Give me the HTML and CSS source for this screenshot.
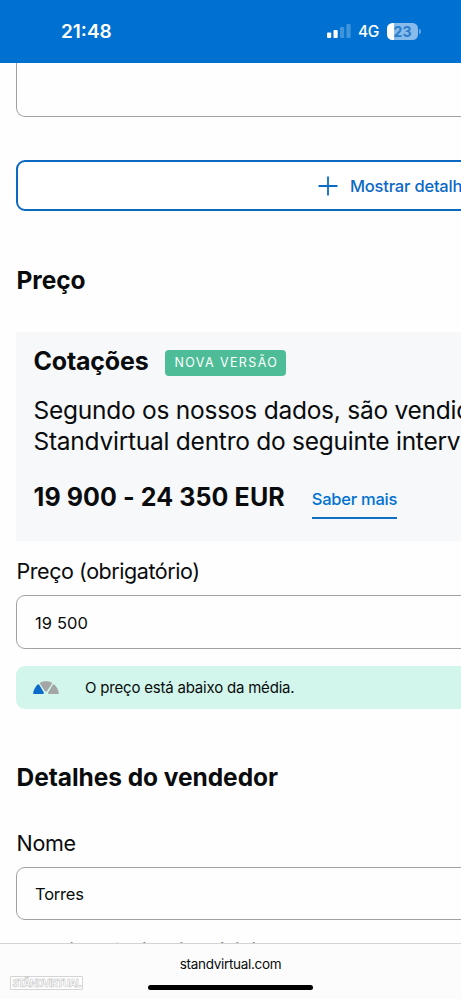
FILE: index.html
```
<!DOCTYPE html>
<html lang="pt">
<head>
<meta charset="utf-8">
<title>Standvirtual</title>
<link rel="stylesheet" href="styles.css">
</head>
<body>
<header class="status">
  <span class="time">21:48</span>
  <div class="indicators">
    <svg class="signal" width="24" height="15" viewBox="0 0 24 15" fill="#fff">
      <rect x="0" y="8.5" width="4.2" height="5.5" rx="1"/>
      <rect x="6.5" y="6" width="4.2" height="8" rx="1"/>
      <rect x="13" y="3" width="4.2" height="11" rx="1" opacity=".25"/>
      <rect x="19.4" y="0" width="4.2" height="14" rx="1" opacity=".25"/>
    </svg>
    <span class="network">4G</span>
    <div class="battery"><span>23</span></div>
    <i class="cap"></i>
  </div>
</header>
<main class="page">
  <div class="field field-cut"></div>
  <button class="more">
    <svg width="20" height="20" viewBox="0 0 20 20" stroke="#0a6cca" stroke-width="1.8"><path d="M10 .5v19M.5 10h19"/></svg>
    <span>Mostrar detalhes</span>
  </button>
  <h2 class="heading price-heading">Preço</h2>
  <section class="quote">
    <div class="quote-title"><h3>Cotações</h3><span class="tag">NOVA VERSÃO</span></div>
    <p>Segundo os nossos dados, são vendidos no<br>Standvirtual dentro do seguinte intervalo</p>
    <div class="range"><strong>19 900 - 24 350 EUR</strong><a>Saber mais</a></div>
  </section>
  <label class="label price-label">Preço (obrigatório)</label>
  <div class="field price">19 500</div>
  <div class="notice">
    <svg width="26" height="14" viewBox="0 0 26 14">
      <path fill="#0b6bc9" d="M4.4 3.7Q5.4 2.8 6.2 3.8L10.8 11.6Q11.2 13 9.8 13H1Q0 13 .2 11.8C.8 8.6 2.2 5.8 4.4 3.7Z"/>
      <path fill="#a3a6a5" d="M7.5 1.6C10.5-.2 15.5-.2 18.5 1.6Q19.3 2.1 18.8 3L14.1 10Q13 11.4 11.9 10L7.2 3Q6.8 2.1 7.5 1.6ZM21.6 3.7Q20.6 2.8 19.8 3.8L15.2 11.6Q14.8 13 16.2 13H25Q26 13 25.8 11.8C25.2 8.6 23.8 5.8 21.6 3.7Z"/>
    </svg>
    <span>O preço está abaixo da média.</span>
  </div>
  <h2 class="heading seller-heading">Detalhes do vendedor</h2>
  <label class="label name-label">Nome</label>
  <div class="field name">Torres</div>
  <label class="label place-label">Localização (obrigatório)</label>
</main>
<footer class="browser">
  <span class="domain">standvirtual.com</span>
  <i class="home"></i>
  <div class="mark">STÂNDVIRTUAL</div>
</footer>
</body>
</html>
```

FILE: styles.css
```
* { box-sizing: border-box; }
body {
  margin: 0;
  width: 461px;
  height: 999px;
  display: grid;
  grid-template-rows: 63px 880px 56px;
  overflow: hidden;
  background: #fefefe;
  color: #090b0d;
  font-family: Inter, sans-serif;
  white-space: nowrap;
}
h2, h3, p { margin: 0; }
.status {
  display: flex;
  justify-content: space-between;
  align-items: flex-start;
  padding: 20px 40px 0 61px;
  background: #0071d1;
  color: #fff;
}
.time { font-size: 19px; line-height: 23px; font-weight: 600; }
.indicators { display: flex; align-items: center; height: 22px; }
.network { margin-left: 7px; width: 22px; font-size: 15.5px; font-weight: 500; letter-spacing: -.5px; }
.battery {
  width: 31px;
  height: 17px;
  margin-left: 7px;
  border-radius: 5.5px;
  background: linear-gradient(90deg, #fff 7px, #86bbeb 7px);
  color: #2b7ccb;
  font-size: 14px;
  font-weight: 700;
  line-height: 17px;
  text-align: center;
}
.cap { width: 2px; height: 5px; margin-left: 1px; border-radius: 0 2px 2px 0; background: #65a9e4; }
.page { overflow: hidden; padding-left: 16px; display: flex; flex-direction: column; }
.page > * { flex-shrink: 0; }
.field {
  width: 700px;
  height: 54px;
  border: 1px solid #a0a1a2;
  border-radius: 9px;
  padding-left: 18px;
  font-size: 16.5px;
  line-height: 53px;
}
.field-cut { border-top: 0; border-radius: 0 0 9px 9px; }
.more {
  width: 700px;
  height: 51px;
  margin: 43px 0 0;
  padding: 0 0 0 300px;
  display: flex;
  align-items: center;
  gap: 12px;
  border: 2px solid #0b69c2;
  border-radius: 9px;
  background: #fff;
  color: #0a68c7;
  font: 500 16.5px/22px Inter, sans-serif;
  letter-spacing: -.2px;
}
.heading { padding-left: .5px; font-size: 24.5px; line-height: 30px; font-weight: 700; letter-spacing: -.05px; }
.price-heading { margin-top: 54px; }
.quote { width: 700px; height: 209px; margin-top: 37px; padding: 13px 0 0 17.5px; background: #f6f8fa; }
.quote-title { display: flex; align-items: center; height: 32px; gap: 17px; }
h3 { font-size: 25px; line-height: 30px; letter-spacing: -.2px; }
.tag {
  width: 121px;
  height: 26px;
  margin-top: 4px;
  padding-left: 9px;
  border-radius: 4px;
  background: #4fbc98;
  color: #fff;
  font-size: 12.5px;
  line-height: 26px;
  letter-spacing: 1.4px;
}
.quote p { margin-top: 18px; font-size: 24.5px; line-height: 31px; letter-spacing: -.25px; }
.range { display: flex; align-items: flex-start; margin-top: 24px; gap: 27px; }
.range strong { font-size: 25px; line-height: 32px; letter-spacing: .1px; }
.range a { height: 38px; border-bottom: 2px solid #0f6fc5; color: #0071d1; font-size: 16.5px; font-weight: 500; line-height: 37px; letter-spacing: -.25px; }
.label { padding-left: .5px; font-size: 21.5px; line-height: 28px; letter-spacing: -.45px; }
.price-label { margin-top: 16px; }
.price { margin-top: 10px; line-height: 54px; letter-spacing: .1px; }
.notice {
  display: flex;
  align-items: center;
  width: 700px;
  height: 43px;
  margin-top: 17px;
  padding-left: 17px;
  gap: 26px;
  border-radius: 9px;
  background: #d2f6eb;
  font-size: 15px;
  letter-spacing: -.2px;
}
.seller-heading { margin-top: 53px; }
.name-label { margin-top: 37px; letter-spacing: -.3px; }
.name { height: 53px; margin-top: 10px; letter-spacing: -.2px; }
.place-label { margin-top: 17px; }
.browser { position: relative; display: flex; flex-direction: column; align-items: center; border-top: 1px solid #d4d4d5; background: #fcfcfc; }
.domain { margin-top: 11px; font-size: 13.5px; line-height: 18px; letter-spacing: -.3px; }
.home { width: 165px; height: 5px; margin-top: 12px; border-radius: 3px; background: #000; }
.mark {
  position: absolute;
  left: 10px;
  top: 32px;
  width: 73px;
  height: 14px;
  border: 1px solid #d5d5d5;
  border-radius: 1px;
  background: #fff;
  color: #fff;
  font-size: 10px;
  font-weight: 800;
  line-height: 12px;
  text-align: center;
  letter-spacing: -.9px;
  -webkit-text-stroke: .5px #bdbdbd;
}
```
